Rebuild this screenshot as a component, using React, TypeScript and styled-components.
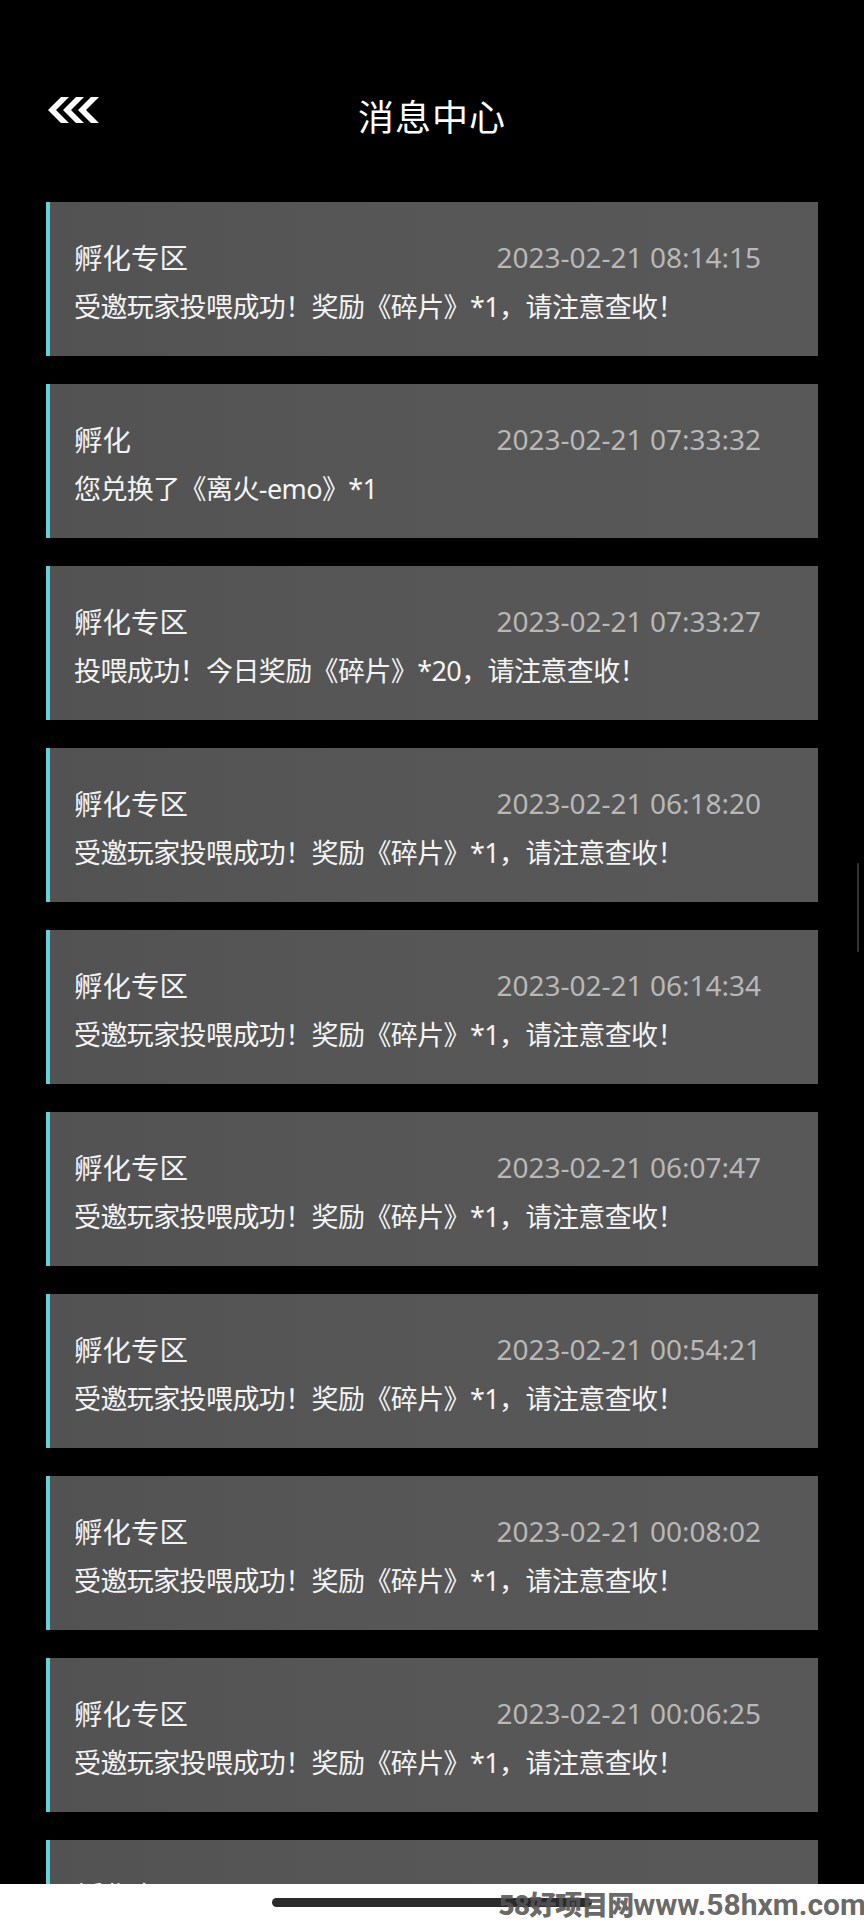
import React from "react";
import styled, { createGlobalStyle } from "styled-components";

const GlobalStyle = createGlobalStyle`
  html, body {
    margin: 0;
    padding: 0;
    background: #000;
  }
  * { box-sizing: border-box; }
`;

const Page = styled.div`
  position: relative;
  width: 864px;
  height: 1920px;
  overflow: hidden;
  background: #000;
  display: flex;
  flex-direction: column;
  font-family: "Noto Sans", "Noto Sans CJK SC", sans-serif;
`;

const Header = styled.header`
  flex-shrink: 0;
  margin-top: 90px;
  height: 50px;
  padding: 0 48px;
  display: grid;
  grid-template-columns: 1fr auto 1fr;
  align-items: center;
`;

const BackButton = styled.button`
  justify-self: start;
  background: none;
  border: 0;
  padding: 0;
  margin-top: -10px;
  width: 52px;
  height: 26px;
  display: flex;
  cursor: pointer;
`;

const Title = styled.h1`
  margin: 0;
  font-family: "Noto Sans CJK SC", sans-serif;
  font-weight: 400;
  font-size: 36px;
  line-height: 50px;
  color: #fff;
  letter-spacing: 1px;
`;

const List = styled.main`
  flex: 1;
  overflow: hidden;
  padding: 62px 46px 0;
  display: flex;
  flex-direction: column;
  gap: 28px;
`;

const Card = styled.article`
  flex-shrink: 0;
  height: 154px;
  background: linear-gradient(90deg, #525252 0%, #565656 40%, #585858 100%);
  border-left: 4px solid #63d3d9;
  padding: 36px 57px 0 24px;
  display: flex;
  flex-direction: column;
  gap: 9px;
`;

const CardTop = styled.div`
  display: flex;
  justify-content: space-between;
  align-items: center;
  height: 40px;
`;

const CardTitle = styled.span`
  font-size: 28.5px;
  line-height: 40px;
  color: #f2f2f2;
`;

const CardDate = styled.span`
  font-size: 28px;
  line-height: 40px;
  color: #b8b8b8;
  margin-top: -2px;
`;

const CardBody = styled.p`
  margin: 0;
  font-size: 27px;
  letter-spacing: -0.6px;
  line-height: 40px;
  color: #f4f4f4;
  white-space: nowrap;
`;

const Footer = styled.footer`
  position: relative;
  flex-shrink: 0;
  height: 36px;
  background: #fff;
  display: flex;
  justify-content: center;
  padding-top: 14px;
`;

const HomeIndicator = styled.div`
  width: 320px;
  height: 9px;
  border-radius: 5px;
  background: #2b2b2b;
`;

const Watermark = styled.span`
  position: absolute;
  right: -2px;
  top: 4px;
  font-family: Roboto, "Noto Sans CJK SC", sans-serif;
  font-weight: 700;
  font-size: 30px;
  line-height: 32px;
  color: rgba(85, 85, 85, 0.9);
  white-space: nowrap;
`;

const WatermarkCjk = styled.span`
  font-family: "Noto Sans CJK SC", sans-serif;
  font-weight: 900;
  font-size: 27px;
  letter-spacing: -1px;
`;

const ScrollThumb = styled.div`
  position: absolute;
  right: 5px;
  top: 863px;
  width: 2px;
  height: 89px;
  border-radius: 1px;
  background: #333;
`;

const BackIcon = () => (
  <svg width="52" height="26" viewBox="0 0 52 26">
    {[0, 15, 30].map((a) => (
      <polygon
        key={a}
        fill="#fff"
        points={`${a + 13},0 ${a + 21},0 ${a + 8},13 ${a + 21},26 ${a + 13},26 ${a},13`}
      />
    ))}
  </svg>
);

type Msg = { title: string; date: string; body: string };

const invited = "受邀玩家投喂成功！奖励《碎片》*1，请注意查收！";

const messages: Msg[] = [
  { title: "孵化专区", date: "2023-02-21 08:14:15", body: invited },
  { title: "孵化", date: "2023-02-21 07:33:32", body: "您兑换了《离火-emo》*1" },
  { title: "孵化专区", date: "2023-02-21 07:33:27", body: "投喂成功！今日奖励《碎片》*20，请注意查收！" },
  { title: "孵化专区", date: "2023-02-21 06:18:20", body: invited },
  { title: "孵化专区", date: "2023-02-21 06:14:34", body: invited },
  { title: "孵化专区", date: "2023-02-21 06:07:47", body: invited },
  { title: "孵化专区", date: "2023-02-21 00:54:21", body: invited },
  { title: "孵化专区", date: "2023-02-21 00:08:02", body: invited },
  { title: "孵化专区", date: "2023-02-21 00:06:25", body: invited },
  { title: "孵化专区", date: "2023-02-21 00:05:48", body: invited },
];

export default function App() {
  return (
    <>
      <GlobalStyle />
      <Page>
        <Header>
          <BackButton aria-label="返回">
            <BackIcon />
          </BackButton>
          <Title>消息中心</Title>
          <span />
        </Header>
        <List>
          {messages.map((m, i) => (
            <Card key={i}>
              <CardTop>
                <CardTitle>{m.title}</CardTitle>
                <CardDate>{m.date}</CardDate>
              </CardTop>
              <CardBody>{m.body}</CardBody>
            </Card>
          ))}
        </List>
        <ScrollThumb />
        <Footer>
          <HomeIndicator />
          <Watermark>
            <WatermarkCjk>58好项目网</WatermarkCjk>www.58hxm.com
          </Watermark>
        </Footer>
      </Page>
    </>
  );
}
